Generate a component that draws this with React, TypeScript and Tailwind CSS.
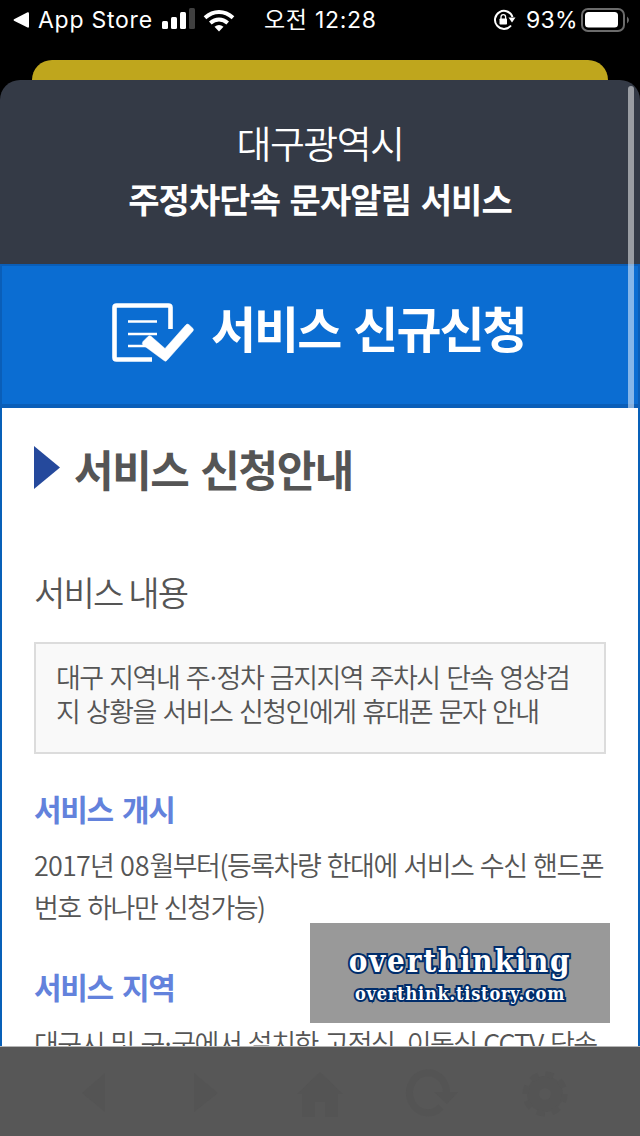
import type { ReactNode } from "react";

const kr = "font-['Noto_Sans_CJK_KR',sans-serif]";

function Line({ className = "", children }: { className?: string; children: ReactNode }) {
  return <span className={`block w-max whitespace-nowrap ${className}`}>{children}</span>;
}

function Dot() {
  return <span className="-mx-[3px]">·</span>;
}

function StatusBar() {
  return (
    <header className="flex h-[60px] items-start text-white font-[Inter,'Noto_Sans_CJK_KR',sans-serif]">
      <div className="flex h-10 w-full items-center pl-[13px]">
        <svg className="h-4 w-4 shrink-0" viewBox="0 0 16 16" fill="currentColor">
          <path d="M1 7.2 14.6.3Q16 0 16 1.5v13Q16 16 14.6 15.5L1 8.8Q0 8 1 7.2Z" />
        </svg>
        <span className="ml-[9px] w-[116px] whitespace-nowrap text-[23px] leading-10 tracking-[0.75px]">App Store</span>
        <svg className="ml-[7px] h-[21px] w-[34px] shrink-0 -translate-y-0.5" viewBox="0 0 34 21" fill="currentColor">
          <rect x="1" y="13" width="6" height="8" rx="1.5" />
          <rect x="10" y="9" width="6" height="12" rx="1.5" />
          <rect x="19" y="4" width="6" height="17" rx="1.5" />
          <rect x="28" y="0" width="6" height="21" rx="1.5" opacity=".25" />
        </svg>
        <svg className="ml-[8px] h-[23px] w-[32px] shrink-0" viewBox="0 0 32 23" fill="none" stroke="currentColor" strokeWidth="4">
          <path d="M2 8.7Q8.500 3 16 3T30 8.700" />
          <path d="M7.300 14Q11.400 10.500 16 10.500T24.700 14" />
          <path d="M11.500 17.800Q16 14.200 20.500 17.800L16 22.500Z" fill="currentColor" stroke="none" />
        </svg>
        <span className="ml-[29px] w-[114px] whitespace-nowrap text-[23px] leading-10 tracking-[0.7px]">오전 12:28</span>
        <svg className="ml-[115px] h-[22px] w-[24px] shrink-0" viewBox="0 0 24 22" fill="none" stroke="currentColor" strokeWidth="2">
          <path d="M19.500 8A9 9 0 1 0 18 16.500" />
          <path d="M15.500 8.500h7l-3.500 5Z" fill="currentColor" stroke="none" />
          <rect x="6.500" y="9.500" width="7.500" height="6" rx=".8" fill="currentColor" stroke="none" />
          <path d="M8 10V8a2.300 2.300 0 0 1 4.600 0v2" strokeWidth="1.300" />
        </svg>
        <span className="ml-[9px] w-[51px] whitespace-nowrap text-[23px] leading-10 tracking-[0.3px]">93%</span>
        <svg className="ml-[4px] h-[24px] w-[49px] shrink-0" viewBox="0 0 49 24">
          <rect x="1" y="1" width="42" height="22" rx="6" fill="none" stroke="#6b6b6b" strokeWidth="2" />
          <rect x="4" y="4" width="33" height="15.500" rx="3.500" fill="white" />
          <path d="M46 8.500q4 3.500 0 7Z" fill="#6b6b6b" />
        </svg>
      </div>
    </header>
  );
}

function FormIcon() {
  return (
    <svg className="h-[60px] w-[82px] shrink-0" viewBox="0 0 82 60" fill="none" stroke="white">
      <path d="M58.500 26V4.500Q58.500 2.500 56.500 2.500H4.500Q2.500 2.500 2.500 4.500V54.500Q2.500 56.500 4.500 56.500H40" strokeWidth="4.600" />
      <path d="M16 18.500H45M16 31H45M16 43H36" strokeWidth="2.600" />
      <path d="M31 38.500 36 33.500Q37.500 32 39 33.200L53 45.500 74 21.800Q75.500 20.500 77 21.700L81 25.500Q82 26.500 81 28L54.800 57.500Q53.500 59 52 57.500L31 42Q29.500 40.500 31 38.500Z" fill="white" strokeWidth="0.500" />
    </svg>
  );
}

function Toolbar() {
  return (
    <footer className="h-[90px] border-t border-[#b5b5b5] bg-[#575757] pt-[21px] text-[#545454]">
      <svg className="h-[50px] w-full" viewBox="0 0 640 50" fill="currentColor">
        <path d="M82 25 105 5V44ZM194 5 218 25 194 44ZM297 26 320 4 343 26H338V49H325V34H315V49H302V26Z" />
        <path d="M441 39A18.500 20 0 1 1 446.500 25" fill="none" stroke="currentColor" strokeWidth="7" />
        <path d="M434 24h24l-11 12Z" />
        <circle cx="545" cy="26" r="12" fill="none" stroke="currentColor" strokeWidth="12" />
        <circle cx="545" cy="26" r="19.500" fill="none" stroke="currentColor" strokeWidth="6" strokeDasharray="8 7.300" />
      </svg>
    </footer>
  );
}

export default function App() {
  return (
    <div className={`relative flex h-[1136px] w-[640px] flex-col overflow-hidden bg-black text-[#555] ${kr}`}>
      <StatusBar />
      <div className="mx-8 h-5 shrink-0 rounded-t-[20px] bg-[#bfa61d]" />

      <div className="flex h-[184px] shrink-0 flex-col items-center rounded-t-[20px] bg-[#343a46] pt-[37px] text-white">
        <Line className="text-[38px] font-[350] leading-[50px] tracking-[-1.6px]">대구광역시</Line>
        <Line className="mt-[7px] text-[34px] font-bold leading-[50px] tracking-[-0.9px] [word-spacing:2.7px]">주정차단속 문자알림 서비스</Line>
      </div>

      <div className="flex h-36 shrink-0 border-2 border-b-4 border-[#0a5eb8] bg-[#0b6dd2] pl-[110px] pt-[37px] text-white">
        <FormIcon />
        <Line className="-mt-[4px] ml-[17px] text-[49px] font-bold leading-[56px] tracking-[-2px] [word-spacing:4px]">서비스 신규신청</Line>
      </div>

      <main className="h-[638px] shrink-0 overflow-hidden border-x-2 border-[#0860b8] bg-white px-8 pt-[37px]">
        <div className="flex">
          <svg className="mt-[1px] h-[43px] w-[26px]" viewBox="0 0 26 43" fill="#25499c">
            <path d="M0 0 26 21.500 0 43Z" />
          </svg>
          <h1 className="-mt-[2px] mb-[2px] ml-[14px]">
            <Line className="text-[43px] font-bold leading-[50px] tracking-[-1.4px] [word-spacing:3.5px]">서비스 신청안내</Line>
          </h1>
        </div>
        <h2 className="mt-[72px]">
          <Line className="text-[34px] font-[350] leading-[50px] tracking-[-1.8px]">서비스 내용</Line>
        </h2>
        <div className="mt-[25px] h-28 border-2 border-[#dcdcdc] bg-[#f9f9f9] pl-5 pt-[16px] text-[27px] font-[350] leading-[34px] tracking-[-1.5px] [word-spacing:2px]">
          <Line>
            대구 지역내 주
            <Dot />
            정차 금지지역 주차시 단속 영상검
          </Line>
          <Line>지 상황을 서비스 신청인에게 휴대폰 문자 안내</Line>
        </div>
        <h3 className="mt-[31px]">
          <Line className="text-[30px] font-bold leading-[46px] tracking-[-1.3px] text-[#6382dc] [word-spacing:3.5px]">서비스 개시</Line>
        </h3>
        <p className="mt-[13px] text-[27px] font-[350] leading-[42px] tracking-[-1.5px] [word-spacing:2px]">
          <Line>
            <span className="tracking-[-0.8px]">2017</span>년 <span className="tracking-[-0.1px]">08</span>월부터(등록차량 한대에 서비스 수신 핸드폰
          </Line>
          <Line>번호 하나만 신청가능)</Line>
        </p>
        <h3 className="mt-[35px]">
          <Line className="text-[30px] font-bold leading-[46px] tracking-[-1.3px] text-[#6382dc] [word-spacing:3.5px]">서비스 지역</Line>
        </h3>
        <p className="mt-[13px] text-[27px] font-[350] leading-[42px] tracking-[-1.5px] [word-spacing:2px]">
          <Line>
            대구시 및 구
            <Dot />
            군에서 설치한 고정식, 이동식 <span className="tracking-[-1px]">CCTV</span> 단속
          </Line>
        </p>
      </main>

      <Toolbar />

      <div className="absolute left-[628px] top-[86px] h-[322px] w-1.5 rounded-t-full bg-white/50" />
      <div className="absolute left-[310px] top-[923px] flex h-[100px] w-[300px] flex-col items-center bg-[#999] pt-[18px] font-['DejaVu_Serif_Condensed','DejaVu_Serif',serif] font-bold text-white [paint-order:stroke_fill] [-webkit-text-stroke:4px_#002d6b]">
        <Line className="text-[31px] leading-[40px] tracking-[1.8px]">overthinking</Line>
        <Line className="text-[18px] leading-[26px] tracking-[0.8px]">overthink.tistory.com</Line>
      </div>
    </div>
  );
}
